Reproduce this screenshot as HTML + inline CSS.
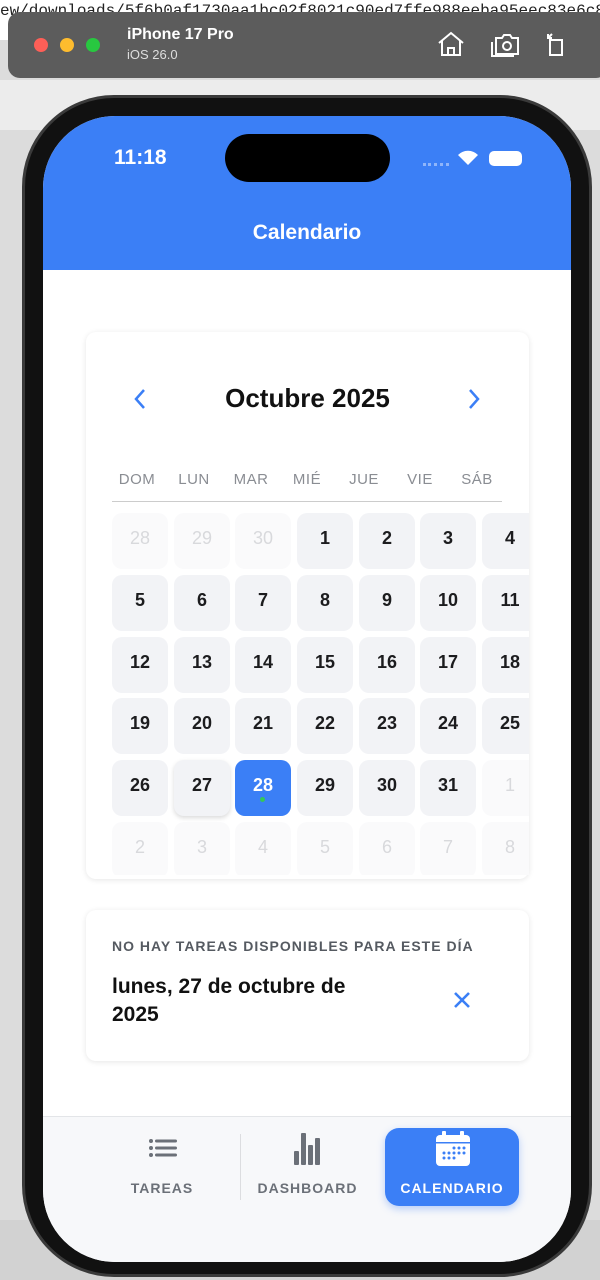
<!DOCTYPE html><html><head><meta charset="utf-8"><style>
*{margin:0;padding:0;box-sizing:border-box}
body{width:600px;height:1280px;overflow:hidden;background:#dcdcdc;font-family:"Liberation Sans",sans-serif;position:relative}
.abs{position:absolute}
.cell{position:absolute;width:56px;height:56px;border-radius:10px;background:#f2f3f6;font-weight:bold;font-size:18px;color:#1c1c1e;display:flex;align-items:center;justify-content:center;padding-bottom:6px}
.cell.f{background:#fafafb;color:#d8d9dc;font-weight:normal}
.wd{position:absolute;top:471px;width:56px;text-align:center;font-size:15px;color:#8a8d93;letter-spacing:.5px}
</style></head><body>
<div class="abs" style="left:0;top:0;width:600px;height:40px;background:#fff;font-family:'Liberation Mono',monospace;font-size:16px;color:#222;white-space:nowrap;line-height:22px">ew/downloads/5f6b0af1730aa1bc02f8021c90ed7ffe988eeba95eec83e6c8</div>
<div class="abs" style="left:0;top:80px;width:600px;height:50px;background:#ececec"></div>
<div class="abs" style="left:0;top:1220px;width:600px;height:60px;background:#d2d2d2"></div>
<div class="abs" style="left:8px;top:12px;width:600px;height:66px;background:#5c5c5c;border-radius:12px"></div>
<div class="abs" style="left:34px;top:38px;width:14px;height:14px;border-radius:50%;background:#fe5f57"></div>
<div class="abs" style="left:60px;top:38px;width:14px;height:14px;border-radius:50%;background:#febc2e"></div>
<div class="abs" style="left:86px;top:38px;width:14px;height:14px;border-radius:50%;background:#28c840"></div>
<div class="abs" style="left:127px;top:26px;color:#fff;font-weight:bold;font-size:16px">iPhone 17 Pro</div>
<div class="abs" style="left:127px;top:47px;color:#ddd;font-size:13px">iOS 26.0</div>
<svg class="abs" style="left:436px;top:30px" width="130" height="28" fill="none" stroke="#fff" stroke-width="2"><path d="M3 13L15 3L27 13M6 11V25H24V11M12 25V18H18V25"/><path d="M60 8h6l2-3h6l2 3h6v16H60zM56 12v14h22"/><circle cx="71" cy="16" r="4"/><path d="M114 10h12v15h-12zM112 8l4-4M112 4v4h4"/></svg>
<div class="abs" style="left:22px;top:95px;width:570px;height:1182px;border-radius:92px;background:#111;border:3px solid #3a3a3a"></div>
<div class="abs" style="left:43px;top:116px;width:528px;height:1146px;border-radius:72px;background:#fff;overflow:hidden">
 <div class="abs" style="left:0;top:0;width:528px;height:154px;background:#3b7ff6"></div>
 <div class="abs" style="left:182px;top:18px;width:165px;height:48px;border-radius:24px;background:#000"></div>
 <div class="abs" style="left:71px;top:30px;color:#fff;font-weight:bold;font-size:21px">11:18</div>
 <div class="abs" style="left:380px;top:47px;width:26px;height:3px;border-top:3px dotted #8fb5fa"></div>
 <svg class="abs" style="left:413px;top:32px" width="24" height="18"><path d="M12 17L2 7a14 14 0 0 1 20 0z" fill="#fff"/></svg>
 <div class="abs" style="left:446px;top:35px;width:33px;height:15px;border-radius:5px;background:#fff"></div>
 <div class="abs" style="left:0;top:105px;width:528px;text-align:center;color:#fff;font-weight:bold;font-size:21px">Calendario</div>
 <div class="abs" style="left:43px;top:216px;width:443px;height:547px;border-radius:10px;background:#fff;box-shadow:0 1px 6px rgba(0,0,0,.1);overflow:hidden"></div>
 <div class="abs" style="left:43px;top:794px;width:443px;height:151px;border-radius:10px;background:#fff;box-shadow:0 1px 6px rgba(0,0,0,.1)"></div>
 <div class="abs" style="left:0;top:1000px;width:528px;height:146px;background:#f7f8fa;border-top:1px solid #e3e5e8"></div>
</div>
<svg class="abs" style="left:132px;top:387px" width="16" height="24" fill="none" stroke="#3b7ff6" stroke-width="2.5"><path d="M12 3L4 12l8 9"/></svg>
<svg class="abs" style="left:466px;top:387px" width="16" height="24" fill="none" stroke="#3b7ff6" stroke-width="2.5"><path d="M4 3l8 9-8 9"/></svg>
<div class="abs" style="left:86px;top:383px;width:443px;text-align:center;font-weight:bold;font-size:26px;color:#111">Octubre 2025</div>
<div class="wd" style="left:109px">DOM</div><div class="wd" style="left:166px">LUN</div><div class="wd" style="left:223px">MAR</div><div class="wd" style="left:279px">MIÉ</div><div class="wd" style="left:336px">JUE</div><div class="wd" style="left:392px">VIE</div><div class="wd" style="left:449px">SÁB</div>
<div class="abs" style="left:112px;top:501px;width:390px;height:1px;background:#ccc"></div>
<div class="abs" style="left:86px;top:505px;width:443px;height:370px;overflow:hidden">
<div style="position:relative">
<div class="cell f" style="left:26px;top:8px">28</div><div class="cell f" style="left:88px;top:8px">29</div><div class="cell f" style="left:149px;top:8px">30</div><div class="cell" style="left:211px;top:8px">1</div><div class="cell" style="left:273px;top:8px">2</div><div class="cell" style="left:334px;top:8px">3</div><div class="cell" style="left:396px;top:8px">4</div>
<div class="cell" style="left:26px;top:70px">5</div><div class="cell" style="left:88px;top:70px">6</div><div class="cell" style="left:149px;top:70px">7</div><div class="cell" style="left:211px;top:70px">8</div><div class="cell" style="left:273px;top:70px">9</div><div class="cell" style="left:334px;top:70px">10</div><div class="cell" style="left:396px;top:70px">11</div>
<div class="cell" style="left:26px;top:132px">12</div><div class="cell" style="left:88px;top:132px">13</div><div class="cell" style="left:149px;top:132px">14</div><div class="cell" style="left:211px;top:132px">15</div><div class="cell" style="left:273px;top:132px">16</div><div class="cell" style="left:334px;top:132px">17</div><div class="cell" style="left:396px;top:132px">18</div>
<div class="cell" style="left:26px;top:193px">19</div><div class="cell" style="left:88px;top:193px">20</div><div class="cell" style="left:149px;top:193px">21</div><div class="cell" style="left:211px;top:193px">22</div><div class="cell" style="left:273px;top:193px">23</div><div class="cell" style="left:334px;top:193px">24</div><div class="cell" style="left:396px;top:193px">25</div>
<div class="cell" style="left:26px;top:255px">26</div><div class="cell" style="left:88px;top:255px;box-shadow:0 2px 5px rgba(0,0,0,.15)">27</div><div class="cell" style="left:149px;top:255px;background:#3b7ff6;color:#fff">28<span style="position:absolute;left:25px;top:37px;width:5px;height:5px;border-radius:50%;background:#34c759"></span></div><div class="cell" style="left:211px;top:255px">29</div><div class="cell" style="left:273px;top:255px">30</div><div class="cell" style="left:334px;top:255px">31</div><div class="cell f" style="left:396px;top:255px">1</div>
<div class="cell f" style="left:26px;top:317px">2</div><div class="cell f" style="left:88px;top:317px">3</div><div class="cell f" style="left:149px;top:317px">4</div><div class="cell f" style="left:211px;top:317px">5</div><div class="cell f" style="left:273px;top:317px">6</div><div class="cell f" style="left:334px;top:317px">7</div><div class="cell f" style="left:396px;top:317px">8</div>
</div></div>
<div class="abs" style="left:112px;top:938px;font-size:14px;font-weight:bold;color:#555a61;letter-spacing:1px">NO HAY TAREAS DISPONIBLES PARA ESTE DÍA</div>
<div class="abs" style="left:112px;top:973px;width:270px;font-size:21px;font-weight:bold;color:#111;line-height:28px">lunes, 27 de octubre de 2025</div>
<svg class="abs" style="left:453px;top:991px" width="18" height="18" stroke="#3b7ff6" stroke-width="2.6"><path d="M2 2l14 14M16 2L2 16"/></svg>
<svg class="abs" style="left:148px;top:1138px" width="30" height="22" fill="#6b7078"><circle cx="3" cy="3" r="2"/><circle cx="3" cy="10" r="2"/><circle cx="3" cy="17" r="2"/><rect x="7" y="1.5" width="22" height="3" rx="1.5"/><rect x="7" y="8.5" width="22" height="3" rx="1.5"/><rect x="7" y="15.5" width="22" height="3" rx="1.5"/></svg>
<div class="abs" style="left:112px;top:1180px;width:100px;text-align:center;font-size:14px;font-weight:bold;color:#6b7078;letter-spacing:1px">TAREAS</div>
<div class="abs" style="left:240px;top:1134px;width:1px;height:66px;background:#dcdde0"></div>
<svg class="abs" style="left:293px;top:1132px" width="30" height="34" fill="#6b7078"><rect x="1" y="19" width="5" height="14" rx="1"/><rect x="8" y="1" width="5" height="32" rx="1"/><rect x="15" y="13" width="5" height="20" rx="1"/><rect x="22" y="6" width="5" height="27" rx="1"/></svg>
<div class="abs" style="left:250px;top:1180px;width:115px;text-align:center;font-size:14px;font-weight:bold;color:#6b7078;letter-spacing:1px">DASHBOARD</div>
<div class="abs" style="left:385px;top:1128px;width:134px;height:78px;border-radius:14px;background:#3b7ff6;box-shadow:0 3px 8px rgba(59,127,246,.35)"></div>
<svg class="abs" style="left:435px;top:1131px" width="36" height="36"><rect x="1" y="4" width="34" height="31" rx="4" fill="#fff"/><rect x="7" y="0" width="4" height="8" rx="1" fill="#fff"/><rect x="25" y="0" width="4" height="8" rx="1" fill="#fff"/><rect x="1" y="11" width="34" height="1.5" fill="#3b7ff6"/><g fill="#3b7ff6"><circle cx="19" cy="17" r="1.5"/><circle cx="24" cy="17" r="1.5"/><circle cx="29" cy="17" r="1.5"/><circle cx="9" cy="22" r="1.5"/><circle cx="14" cy="22" r="1.5"/><circle cx="19" cy="22" r="1.5"/><circle cx="24" cy="22" r="1.5"/><circle cx="29" cy="22" r="1.5"/><circle cx="9" cy="27" r="1.5"/><circle cx="14" cy="27" r="1.5"/><circle cx="19" cy="27" r="1.5"/></g></svg>
<div class="abs" style="left:385px;top:1180px;width:134px;text-align:center;font-size:14px;font-weight:bold;color:#fff;letter-spacing:1px">CALENDARIO</div>
</body></html>
